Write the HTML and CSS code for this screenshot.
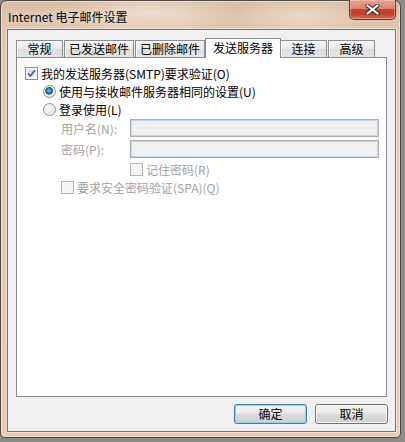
FILE: index.html
```html
<!DOCTYPE html>
<html>
<head>
    <meta charset="utf-8">
    <title>Internet 电子邮件设置</title>
    <link rel="stylesheet" href="styles.css">
</head>
<body>
    <div class="window">
        <div class="titlebar">
            <span class="title">Internet 电子邮件设置</span>
            <button type="button" class="close-button">
                <svg width="15" height="11" viewBox="0 0 15 11">
                    <path d="M2.5 1.5 L12.5 9.5 M12.5 1.5 L2.5 9.5" stroke="#4a2e2a" stroke-width="4.2" stroke-linecap="round"/>
                    <path d="M2.5 1.5 L12.5 9.5 M12.5 1.5 L2.5 9.5" stroke="#fff" stroke-width="2.2" stroke-linecap="round"/>
                </svg>
            </button>
        </div>

        <div class="client">
            <div class="tabs">
                <div class="tab">常规</div>
                <div class="tab">已发送邮件</div>
                <div class="tab">已删除邮件</div>
                <div class="tab tab-active">发送服务器</div>
                <div class="tab">连接</div>
                <div class="tab">高级</div>
            </div>

            <div class="tab-panel">
                <label class="row">
                    <span class="checkbox">
                        <svg width="11" height="11" viewBox="0 0 11 11">
                            <path d="M2 5.5 L4.3 8 L9 2.2" fill="none" stroke="#3f5ea6" stroke-width="1.7"/>
                        </svg>
                    </span>
                    <span>我的发送服务器(SMTP)要求验证(O)</span>
                </label>
                <label class="row row-indent">
                    <span class="radio radio-checked"></span>
                    <span>使用与接收邮件服务器相同的设置(U)</span>
                </label>
                <label class="row row-indent">
                    <span class="radio"></span>
                    <span>登录使用(L)</span>
                </label>

                <div class="field-row disabled">
                    <span class="field-label">用户名(N):</span>
                    <span class="textbox"></span>
                </div>
                <div class="field-row disabled">
                    <span class="field-label">密码(P):</span>
                    <span class="textbox"></span>
                </div>
                <label class="row row-remember disabled">
                    <span class="checkbox checkbox-disabled"></span>
                    <span>记住密码(R)</span>
                </label>
                <label class="row row-sub disabled">
                    <span class="checkbox checkbox-disabled"></span>
                    <span>要求安全密码验证(SPA)(Q)</span>
                </label>
            </div>

            <div class="buttons">
                <button type="button" class="button button-default">确定</button>
                <button type="button" class="button">取消</button>
            </div>
        </div>
    </div>
</body>
</html>
```

FILE: styles.css
```css
* {
    box-sizing: border-box;
}

body {
    margin: 0;
    padding: 0;
    background-color: #8e8a86;
    font-family: "Noto Sans CJK SC", sans-serif;
    font-size: 12px;
    color: #000;
}

.window {
    width: 401px;
    height: 438px;
    display: flex;
    flex-direction: column;
    border: 1px solid #4f4843;
    border-radius: 7px 7px 5px 5px;
    background:
        radial-gradient(ellipse 90px 20px at 150px 12px, rgba(255, 245, 235, 0.55), transparent),
        radial-gradient(ellipse 70px 18px at 300px 14px, rgba(255, 245, 235, 0.4), transparent),
        linear-gradient(#d8bea7, #e3c8b1 30px, #e9cbb1);
    box-shadow: inset 0 0 0 1px rgba(255, 255, 255, 0.45);
}

.titlebar {
    height: 28px;
    display: flex;
    justify-content: space-between;
    align-items: flex-start;
    padding: 0 4px 0 7px;
}

.title {
    margin-top: 7px;
    line-height: 18px;
    font-size: 12px;
    text-shadow: 0 0 6px rgba(255, 250, 245, 0.9);
}

.close-button {
    width: 47px;
    height: 20px;
    margin-top: -1px;
    padding: 0;
    display: flex;
    align-items: center;
    justify-content: center;
    border: 1px solid #6e2f26;
    border-top: none;
    border-radius: 0 0 5px 5px;
    background: linear-gradient(#e7a696, #d98372 45%, #c4432e 50%, #c23f29 75%, #d7775c);
    box-shadow: inset 0 0 0 1px rgba(255, 200, 190, 0.45);
}

.client {
    flex: 1;
    margin: 0 4px 5px 6px;
    padding: 8px 8px 0 8px;
    border: 1px solid #6e7378;
    background-color: #f0f0f0;
    box-shadow: 0 0 0 1px rgba(255, 255, 255, 0.5);
}

.tabs {
    display: flex;
    align-items: flex-end;
    height: 19px;
}

.tab {
    height: 17px;
    min-width: 47px;
    margin-right: 1px;
    padding: 0 4px;
    border: 1px solid #898c95;
    border-bottom: none;
    text-align: center;
    line-height: 15px;
    white-space: nowrap;
    background: linear-gradient(#f3f3f3, #ebebeb 50%, #dedede 50%, #e5e5e5);
    box-shadow: inset 1px 1px 0 #fcfcfc;
}

.tab-active {
    position: relative;
    z-index: 1;
    height: 20px;
    margin: 0 -1px -1px -1px;
    padding: 0 7px;
    line-height: 17px;
    background: #fff;
    box-shadow: none;
}

.tab-panel {
    height: 340px;
    padding: 6px 0 0 8px;
    border: 1px solid #898c95;
    background-color: #fff;
}

.row {
    display: flex;
    align-items: center;
    height: 18px;
    white-space: nowrap;
}

.row-indent {
    margin-left: 18px;
}

.row-remember {
    margin-left: 105px;
    margin-top: 2px;
}

.row-sub {
    margin-left: 36px;
}

.disabled {
    color: #a2a2a2;
}

.checkbox {
    width: 13px;
    height: 13px;
    margin-right: 3px;
    flex-shrink: 0;
    display: flex;
    align-items: center;
    justify-content: center;
    border: 1px solid #8e8f8f;
    background: linear-gradient(135deg, #c6cacf, #f7f7f7);
    box-shadow: inset 0 0 0 2px #f5f5f5;
}

.checkbox-disabled {
    border-color: #b4b4b4;
    background: #f4f4f4;
    box-shadow: none;
}

.radio {
    width: 13px;
    height: 13px;
    margin-right: 3px;
    flex-shrink: 0;
    border: 1px solid #8e8f8f;
    border-radius: 50%;
    background: radial-gradient(circle at 40% 35%, #fafafa, #d6d6d6);
    box-shadow: inset 0 0 0 1px #f6f6f6;
}

.radio-checked {
    background: radial-gradient(circle at 45% 42%, #8ad6fb 0, #2c8fd8 1.8px, #124f8e 3.4px, #3a6fa5 3.8px, #f4f4f4 4.3px, #d9d9d9 6px);
}

.field-row {
    display: flex;
    align-items: center;
    height: 18px;
    margin-top: 1px;
    margin-left: 36px;
    white-space: nowrap;
}

.field-row + .field-row {
    margin-top: 3px;
}

.field-label {
    width: 69px;
}

.textbox {
    width: 249px;
    height: 18px;
    border: 1px solid #aaaeb2;
    background-color: #f0f0f0;
    box-shadow: inset 0 0 0 1px #c3d5ea;
}

.buttons {
    display: flex;
    justify-content: flex-end;
    gap: 8px;
    margin: 7px -1px 0 0;
}

.button {
    width: 73px;
    height: 20px;
    padding: 0;
    border: 1px solid #707070;
    border-radius: 3px;
    font-family: "Noto Sans CJK SC", sans-serif;
    font-size: 12px;
    line-height: 16px;
    color: #000;
    background: linear-gradient(#f2f2f2, #ebebeb 45%, #dddddd 50%, #cfcfcf);
    box-shadow: inset 0 0 0 1px #fcfcfc;
}

.button-default {
    border-color: #3c7fb1;
    box-shadow: inset 0 0 0 1px #8fd2f3;
}
```
